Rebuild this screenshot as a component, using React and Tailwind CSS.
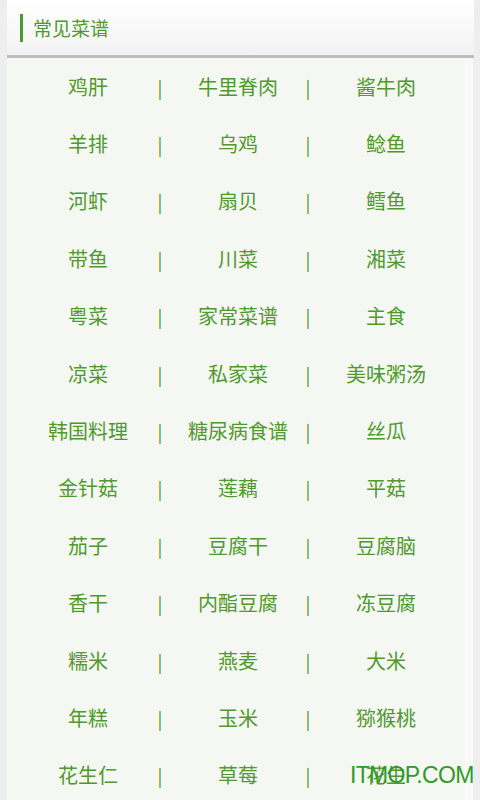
import React from 'react';

const rows = [
  ['鸡肝', '牛里脊肉', '酱牛肉'],
  ['羊排', '乌鸡', '鲶鱼'],
  ['河虾', '扇贝', '鳕鱼'],
  ['带鱼', '川菜', '湘菜'],
  ['粤菜', '家常菜谱', '主食'],
  ['凉菜', '私家菜', '美味粥汤'],
  ['韩国料理', '糖尿病食谱', '丝瓜'],
  ['金针菇', '莲藕', '平菇'],
  ['茄子', '豆腐干', '豆腐脑'],
  ['香干', '内酯豆腐', '冻豆腐'],
  ['糯米', '燕麦', '大米'],
  ['年糕', '玉米', '猕猴桃'],
  ['花生仁', '草莓', '花生'],
];

const font = { fontFamily: '"Noto Sans CJK SC", "Noto Sans", sans-serif' };

export default function App() {
  return (
    <div className="relative w-[480px] h-[800px] overflow-hidden bg-[#eeeeee]" style={font}>
      {/* Header card */}
      <div className="ml-[7px] w-[467px] h-[58px] bg-gradient-to-b from-white to-[#f2f2f2] border-b-[3px] border-[#bdbdbd] flex items-center">
        <div className="ml-[13px] w-[3px] h-[28px] bg-[#4a9a2e]" />
        <span className="ml-[10px] text-[19px] text-[#4e9a2c] leading-none">常见菜谱</span>
      </div>

      {/* List panel */}
      <div className="ml-[7px] w-[466px] flex">
        <div className="w-[458px] bg-[#f5f7f3]">
          {rows.map((r, i) => (
            <div key={i} className="h-[57.4px] flex items-center text-[20px] text-[#4e9a2c] leading-none">
              <div className="w-[150px] pl-[12px] text-center">{r[0]}</div>
              <div className="w-[6px] text-center text-[18px]">|</div>
              <div className="w-[142px] pl-[8px] text-center">{r[1]}</div>
              <div className="w-[6px] text-center text-[18px]">|</div>
              <div className="w-[150px] text-center">{r[2]}</div>
            </div>
          ))}
        </div>
        <div className="w-[8px] bg-[#f9f9f9]" />
      </div>

      {/* watermark */}
      <div
        className="absolute left-[350px] top-[764px] text-[23px] text-[#2f9a2a] leading-none tracking-[-0.7px]"
        style={{ fontFamily: '"Liberation Sans", Arial, sans-serif' }}
      >
        ITMOP.COM
      </div>
    </div>
  );
}
